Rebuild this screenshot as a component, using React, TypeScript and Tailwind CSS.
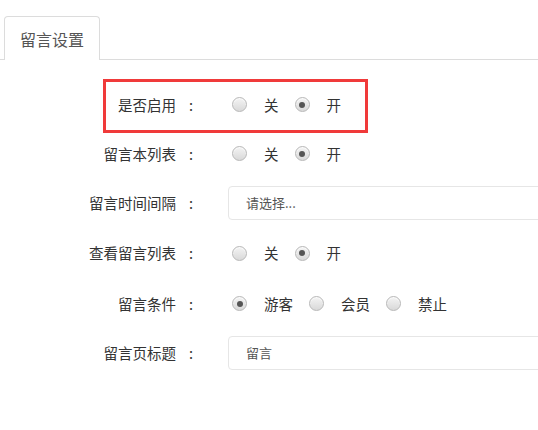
import React from "react";

const font = { fontFamily: '"Noto Sans CJK SC", "Noto Sans", sans-serif' };

function Radio({ checked }: { checked?: boolean }) {
  return (
    <span className="relative inline-flex h-[15px] w-[15px] shrink-0 items-center justify-center rounded-full border border-[#b8b8b8] bg-gradient-to-b from-[#f4f4f4] to-[#d9d9d9] shadow-[inset_0_1px_1px_rgba(255,255,255,0.8)]">
      {checked && <span className="h-[6px] w-[6px] rounded-full bg-[#555]" />}
    </span>
  );
}

function Options({ items, checked }: { items: string[]; checked: number }) {
  return (
    <div className="ml-[26px] flex items-center">
      {items.map((t, i) => (
        <div key={t} className="flex items-center">
          <Radio checked={i === checked} />
          <span className="ml-[17px] mr-[16px] text-[14.5px] text-[#333]">{t}</span>
        </div>
      ))}
    </div>
  );
}

function Label({ text }: { text: string }) {
  return (
    <div className="flex w-[206px] shrink-0 items-center justify-end text-[14.5px] text-[#333]">
      <span>{text}</span>
      <span className="w-[30px] text-center">:</span>
    </div>
  );
}

function Input({ text }: { text: string }) {
  return (
    <div className="ml-[22px] flex h-[34px] w-[400px] shrink-0 items-center rounded-[4px] border border-[#e6e6e6] bg-white pl-[17px] text-[13px] text-[#555]">
      {text}
    </div>
  );
}

export default function App() {
  return (
    <div className="relative h-[430px] w-[538px] overflow-hidden bg-white" style={font}>
      <div className="pt-[16px]">
        <div className="flex border-b border-[#dcdcdc] pl-[4px]">
          <div className="mb-[-1px] flex h-[44px] items-center rounded-t-[4px] border border-b-0 border-[#dcdcdc] bg-white px-[15px] text-[16px] text-[#555]">
            留言设置
          </div>
        </div>
      </div>
      <div className="pt-[20px]">
        <div className="flex h-[49px] items-center">
          <Label text="是否启用" />
          <Options items={["关", "开"]} checked={1} />
        </div>
        <div className="flex h-[49px] items-center">
          <Label text="留言本列表" />
          <Options items={["关", "开"]} checked={1} />
        </div>
        <div className="flex h-[49px] items-center">
          <Label text="留言时间间隔" />
          <Input text="请选择..." />
        </div>
        <div className="flex h-[52px] items-center">
          <Label text="查看留言列表" />
          <Options items={["关", "开"]} checked={1} />
        </div>
        <div className="flex h-[49px] items-center">
          <Label text="留言条件" />
          <Options items={["游客", "会员", "禁止"]} checked={0} />
        </div>
        <div className="flex h-[50px] items-center">
          <Label text="留言页标题" />
          <Input text="留言" />
        </div>
      </div>
      <div className="pointer-events-none absolute left-[103px] top-[79px] h-[54px] w-[265px] border-[3px] border-[#f03a3a]" />
    </div>
  );
}
